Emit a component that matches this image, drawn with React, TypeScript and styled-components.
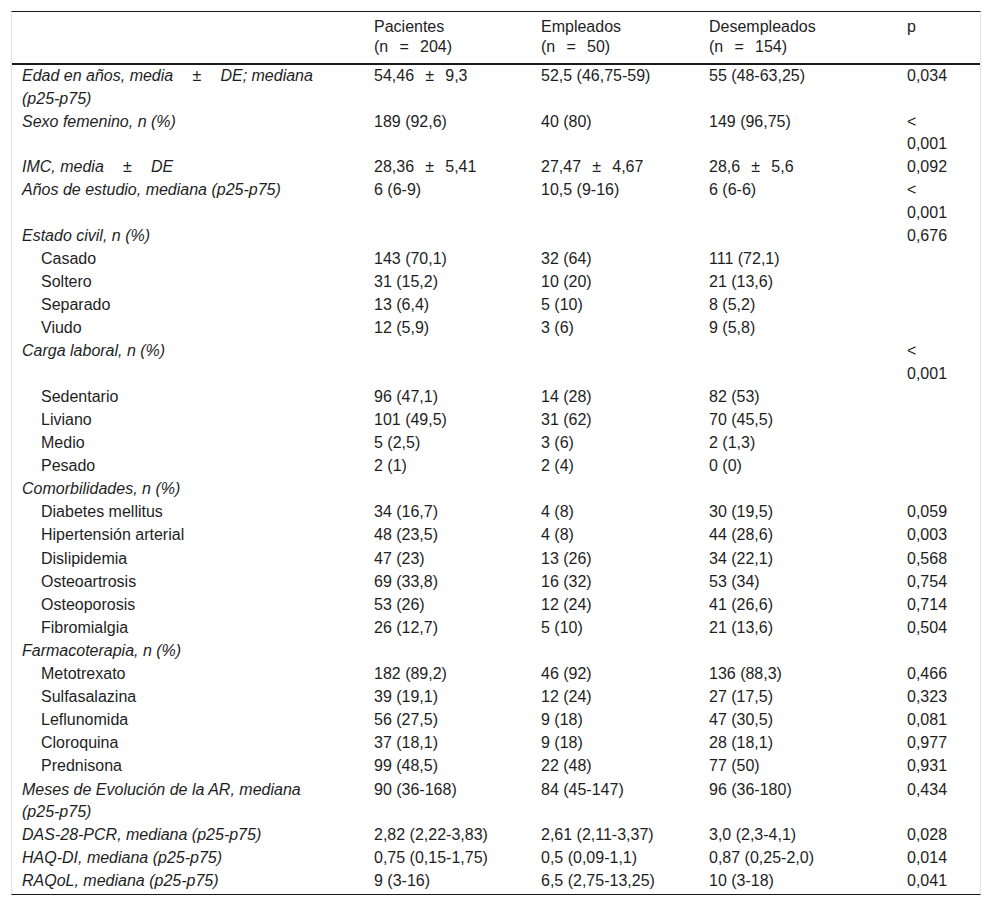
import React from 'react'
import styled, { createGlobalStyle } from 'styled-components'

type Row = {
  label: string
  range?: boolean
  sub?: boolean
  cells?: [string, string, string]
  p?: string
  lessThan?: boolean
}

// spacing used around "±" and "=" inside the value cells, wider one in labels
const S = '\u2002\u2009'
const L = '\u2003\u2009'

const rows: Row[] = [
  { label: `Edad en años, media${L}±${L}DE; mediana`, range: true, cells: [`54,46${S}±${S}9,3`, '52,5 (46,75-59)', '55 (48-63,25)'], p: '0,034' },
  { label: 'Sexo femenino, n (%)', cells: ['189 (92,6)', '40 (80)', '149 (96,75)'], p: '0,001', lessThan: true },
  { label: `IMC, media${L}±${L}DE`, cells: [`28,36${S}±${S}5,41`, `27,47${S}±${S}4,67`, `28,6${S}±${S}5,6`], p: '0,092' },
  { label: 'Años de estudio, mediana', range: true, cells: ['6 (6-9)', '10,5 (9-16)', '6 (6-6)'], p: '0,001', lessThan: true },
  { label: 'Estado civil, n (%)', p: '0,676' },
  { label: 'Casado', sub: true, cells: ['143 (70,1)', '32 (64)', '111 (72,1)'] },
  { label: 'Soltero', sub: true, cells: ['31 (15,2)', '10 (20)', '21 (13,6)'] },
  { label: 'Separado', sub: true, cells: ['13 (6,4)', '5 (10)', '8 (5,2)'] },
  { label: 'Viudo', sub: true, cells: ['12 (5,9)', '3 (6)', '9 (5,8)'] },
  { label: 'Carga laboral, n (%)', p: '0,001', lessThan: true },
  { label: 'Sedentario', sub: true, cells: ['96 (47,1)', '14 (28)', '82 (53)'] },
  { label: 'Liviano', sub: true, cells: ['101 (49,5)', '31 (62)', '70 (45,5)'] },
  { label: 'Medio', sub: true, cells: ['5 (2,5)', '3 (6)', '2 (1,3)'] },
  { label: 'Pesado', sub: true, cells: ['2 (1)', '2 (4)', '0 (0)'] },
  { label: 'Comorbilidades, n (%)' },
  { label: 'Diabetes mellitus', sub: true, cells: ['34 (16,7)', '4 (8)', '30 (19,5)'], p: '0,059' },
  { label: 'Hipertensión arterial', sub: true, cells: ['48 (23,5)', '4 (8)', '44 (28,6)'], p: '0,003' },
  { label: 'Dislipidemia', sub: true, cells: ['47 (23)', '13 (26)', '34 (22,1)'], p: '0,568' },
  { label: 'Osteoartrosis', sub: true, cells: ['69 (33,8)', '16 (32)', '53 (34)'], p: '0,754' },
  { label: 'Osteoporosis', sub: true, cells: ['53 (26)', '12 (24)', '41 (26,6)'], p: '0,714' },
  { label: 'Fibromialgia', sub: true, cells: ['26 (12,7)', '5 (10)', '21 (13,6)'], p: '0,504' },
  { label: 'Farmacoterapia, n (%)' },
  { label: 'Metotrexato', sub: true, cells: ['182 (89,2)', '46 (92)', '136 (88,3)'], p: '0,466' },
  { label: 'Sulfasalazina', sub: true, cells: ['39 (19,1)', '12 (24)', '27 (17,5)'], p: '0,323' },
  { label: 'Leflunomida', sub: true, cells: ['56 (27,5)', '9 (18)', '47 (30,5)'], p: '0,081' },
  { label: 'Cloroquina', sub: true, cells: ['37 (18,1)', '9 (18)', '28 (18,1)'], p: '0,977' },
  { label: 'Prednisona', sub: true, cells: ['99 (48,5)', '22 (48)', '77 (50)'], p: '0,931' },
  { label: 'Meses de Evolución de la AR, mediana', range: true, cells: ['90 (36-168)', '84 (45-147)', '96 (36-180)'], p: '0,434' },
  { label: 'DAS-28-PCR, mediana', range: true, cells: ['2,82 (2,22-3,83)', '2,61 (2,11-3,37)', '3,0 (2,3-4,1)'], p: '0,028' },
  { label: 'HAQ-DI, mediana', range: true, cells: ['0,75 (0,15-1,75)', '0,5 (0,09-1,1)', '0,87 (0,25-2,0)'], p: '0,014' },
  { label: 'RAQoL, mediana', range: true, cells: ['9 (3-16)', '6,5 (2,75-13,25)', '10 (3-18)'], p: '0,041' },
]

const headers: [string, string][] = [
  ['Pacientes', '204'],
  ['Empleados', '50'],
  ['Desempleados', '154'],
]

const colWidths = [356, 167, 168, 198, 79]

const App: React.FC = () => {
  return (
    <>
      <GlobalStyle />
      <Page>
        <Frame>
          <DataTable>
            <colgroup>
              {colWidths.map((w, i) => (
                <Column key={i} $width={w} />
              ))}
            </colgroup>
            <thead>
              <tr>
                <HeadCell />
                {headers.map(([title, n]) => (
                  <HeadCell key={title}>
                    {title}
                    <br />
                    (n{S}={S}
                    {n})
                  </HeadCell>
                ))}
                <HeadCell>p</HeadCell>
              </tr>
            </thead>
            <tbody>
              {rows.map((row, index) => (
                <tr key={index}>
                  <LabelCell $sub={row.sub}>
                    {row.label}
                    {row.range && (
                      <>
                        {' '}
                        <NoWrap>(p25-p75)</NoWrap>
                      </>
                    )}
                  </LabelCell>
                  <Cell>{row.cells?.[0]}</Cell>
                  <Cell>{row.cells?.[1]}</Cell>
                  <Cell>{row.cells?.[2]}</Cell>
                  <Cell>
                    {row.lessThan ? (
                      <>
                        &lt;
                        <br />
                        {row.p}
                      </>
                    ) : (
                      row.p
                    )}
                  </Cell>
                </tr>
              ))}
            </tbody>
          </DataTable>
        </Frame>
      </Page>
    </>
  )
}

const GlobalStyle = createGlobalStyle`
  body {
    margin: 0;
    background: #fff;
    font-family: 'Liberation Sans', Arial, sans-serif;
    color: #1e1e1e;
  }
`

const Page = styled.div`
  padding: 11px 11px 12px;
`

const Frame = styled.div`
  width: 970px;
  border-top: 1px solid #1a1a1a;
  border-bottom: 1px solid #1a1a1a;
  border-left: 1px solid #e4e4e4;
  border-right: 1px solid #e4e4e4;
  box-sizing: border-box;
`

const DataTable = styled.table`
  width: 968px;
  table-layout: fixed;
  border-collapse: collapse;
  font-size: 16px;
  margin-bottom: 1px;
`

const Column = styled.col<{ $width: number }>`
  width: ${(p) => p.$width}px;
`

const HeadCell = styled.th`
  text-align: left;
  vertical-align: top;
  font-weight: normal;
  line-height: 20px;
  padding: 5px 6px 6px;
  border-bottom: 2px solid #1a1a1a;
  &:first-child {
    padding-left: 10px;
  }
`

const Cell = styled.td`
  vertical-align: top;
  line-height: 22.4px;
  padding: 0.35px 6px;
`

const LabelCell = styled(Cell)<{ $sub?: boolean }>`
  padding-left: ${(p) => (p.$sub ? '29px' : '10px')};
  font-style: ${(p) => (p.$sub ? 'normal' : 'italic')};
`

const NoWrap = styled.span`
  white-space: nowrap;
`

export default App
